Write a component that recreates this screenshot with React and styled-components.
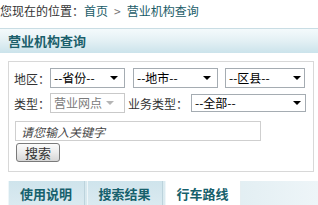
import React from 'react'
import styled, { createGlobalStyle } from 'styled-components'

const GlobalStyle = createGlobalStyle`
    body {
        margin: 0;
        background: #fff;
        font-family: "Noto Sans CJK SC", "DejaVu Sans", sans-serif;
        font-size: 12px;
        color: #333;
    }
`

const Page = styled.div`
    width: 318px;
    height: 205px;
    overflow: hidden;
`

const Breadcrumb = styled.div`
    height: 28px;
    padding-top: 2px;
    box-sizing: border-box;
    font-size: 12px;
    line-height: 18px;
    color: #333;
    white-space: nowrap;
`

const CrumbLink = styled.a`
    color: #1a5c68;
    text-decoration: none;
`

const CrumbSep = styled.span`
    color: #777;
    margin: 0 6px;
`

const HeaderBar = styled.div`
    height: 24px;
    border-top: 1px solid #c9dde4;
    background: linear-gradient(to bottom, #f4fafc 0%, #e3f0f4 50%, #cbe3eb 100%);
    padding-left: 8px;
    font-size: 13px;
    font-weight: bold;
    line-height: 23px;
    color: #1b5f6b;
`

const Panel = styled.div`
    margin: 8px 4px 0 8px;
    height: 111px;
    border: 1px solid #d8d8d8;
    box-sizing: border-box;
    padding: 6px 5px 0 5px;
`

const Row = styled.div`
    display: flex;
    align-items: center;
    height: 20px;
    margin-bottom: ${({ gap }) => gap || 0}px;
`

const Label = styled.span`
    font-size: 12px;
    color: #333;
    width: ${({ w }) => w}px;
    flex-shrink: 0;
    white-space: nowrap;
`

const SelectBox = styled.div`
    position: relative;
    box-sizing: border-box;
    width: ${({ w }) => w}px;
    height: ${({ h }) => h || 20}px;
    margin-right: ${({ mr }) => mr || 0}px;
    border: 1px solid ${({ disabled }) => disabled ? '#c9c9c9' : '#a5acb2'};
    background: #fff;
    padding-left: 3px;
    font-size: 12px;
    line-height: ${({ h }) => (h || 20) - 2}px;
    color: ${({ disabled }) => disabled ? '#7a7a7a' : '#000'};
    white-space: nowrap;
`

const Arrow = styled.span`
    position: absolute;
    top: 50%;
    right: ${({ r }) => r}px;
    margin-top: -2px;
    width: 0;
    height: 0;
    border-left: 4px solid transparent;
    border-right: 4px solid transparent;
    border-top: 4px solid ${({ disabled }) => disabled ? '#b5b5b5' : '#000'};
`

const KeywordInput = styled.input`
    display: block;
    box-sizing: border-box;
    width: 246px;
    height: 20px;
    margin: 8px 0 0 1px;
    border: 1px solid #cfcfcf;
    padding: 0 5px;
    font-family: inherit;
    font-size: 12px;
    outline: none;
    &::placeholder {
        color: #444;
        font-style: italic;
    }
`

const SearchButton = styled.button`
    display: block;
    box-sizing: border-box;
    width: 44px;
    height: 19px;
    margin: 2px 0 0 2px;
    padding: 0;
    border: 1px solid #7a7a7a;
    border-radius: 3px;
    background: linear-gradient(to bottom, #fbfbfb 0%, #ececec 50%, #d6d6d6 100%);
    font-family: inherit;
    font-size: 13px;
    line-height: 17px;
    color: #333;
`

const TabBar = styled.div`
    display: flex;
    margin: 9px 0 0 8px;
    height: 28px;
    background: linear-gradient(to right, #d3e6ed 0%, #dcebf0 60%, #eef5f8 100%);
`

const Tab = styled.div`
    width: ${({ w }) => w}px;
    margin-right: 2px;
    box-sizing: border-box;
    text-align: center;
    font-size: 13px;
    font-weight: bold;
    line-height: 26px;
    color: #16606c;
    background: ${({ active }) => active ? '#fff' : 'linear-gradient(to bottom, #cfe4ec 0%, #dcebf1 100%)'};
    border-right: 1px solid ${({ active }) => active ? '#e6eef1' : '#bcd3dc'};
    box-shadow: inset 1px 0 0 #eef6f9;
`

const tabs = [
    { title: '使用说明', w: 77 },
    { title: '搜索结果', w: 76 },
    { title: '行车路线', w: 76, active: true },
]

const App = () => {
    return (
        <Page>
            <GlobalStyle />
            <Breadcrumb>
                您现在的位置：<CrumbLink href="#">首页</CrumbLink>
                <CrumbSep>&gt;</CrumbSep>
                <CrumbLink href="#">营业机构查询</CrumbLink>
            </Breadcrumb>
            <HeaderBar>营业机构查询</HeaderBar>
            <Panel>
                <Row gap={5}>
                    <Label w={36}>地区：</Label>
                    <SelectBox w={75} mr={8}>--省份--<Arrow r={6} /></SelectBox>
                    <SelectBox w={85} mr={7}>--地市--<Arrow r={6} /></SelectBox>
                    <SelectBox w={80}>--区县--<Arrow r={3} /></SelectBox>
                </Row>
                <Row>
                    <Label w={36}>类型：</Label>
                    <SelectBox w={75} mr={3} disabled>营业网点<Arrow r={10} disabled /></SelectBox>
                    <Label w={63}>业务类型：</Label>
                    <SelectBox w={115} h={18}>--全部--<Arrow r={4} /></SelectBox>
                </Row>
                <KeywordInput placeholder="请您输入关键字" />
                <SearchButton>搜索</SearchButton>
            </Panel>
            <TabBar>
                {tabs.map((tab, i) => (
                    <Tab key={i} w={tab.w} active={tab.active}>{tab.title}</Tab>
                ))}
            </TabBar>
        </Page>
    )
}

export default App
